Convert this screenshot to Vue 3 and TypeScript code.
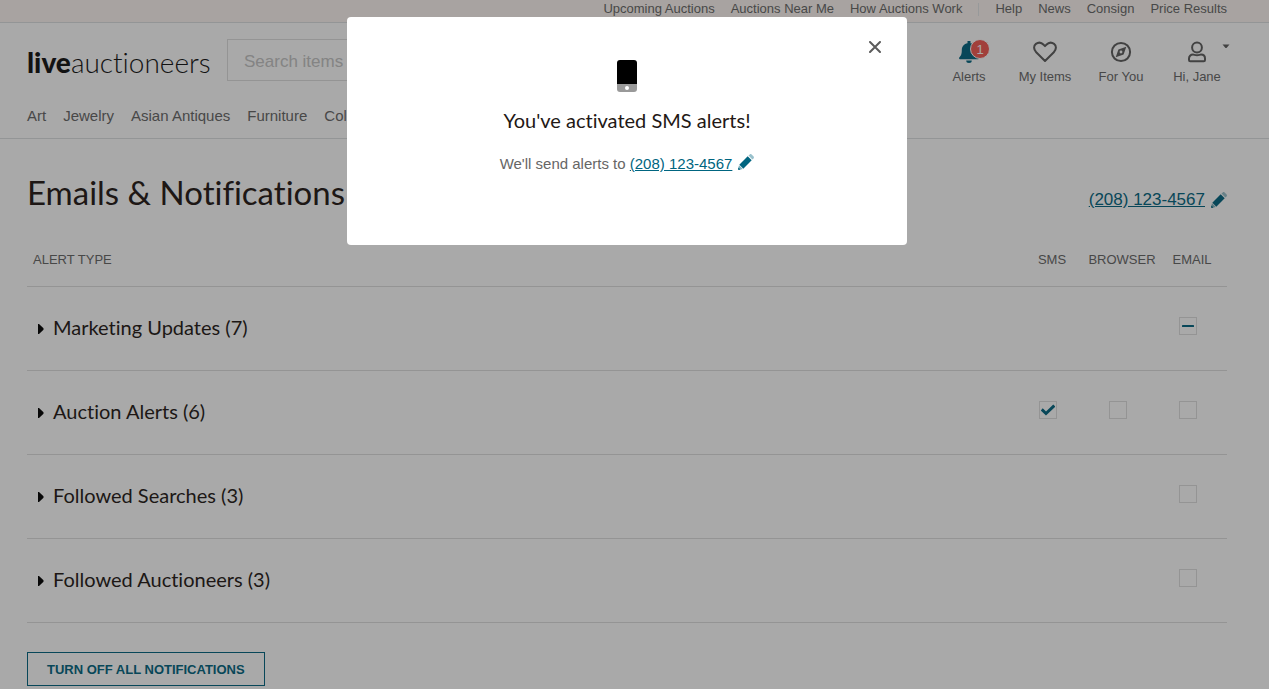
<script setup lang="ts">
import { ref } from 'vue'

type Mark = 'on' | 'off' | 'mixed'
type Channel = 'sms' | 'browser' | 'email'

interface AlertGroup {
  name: string
  count: number
  marks: Partial<Record<Channel, Mark>>
}

const companyLinks = ['Upcoming Auctions', 'Auctions Near Me', 'How Auctions Work']
const helpLinks = ['Help', 'News', 'Consign', 'Price Results']
const categories = ['Art', 'Jewelry', 'Asian Antiques', 'Furniture', 'Collectibles']
const channels: { key: Channel; label: string }[] = [
  { key: 'sms', label: 'SMS' },
  { key: 'browser', label: 'BROWSER' },
  { key: 'email', label: 'EMAIL' },
]
const phone = '(208) 123-4567'
const search = ref('')
const modalOpen = ref(true)

const groups = ref<AlertGroup[]>([
  { name: 'Marketing Updates', count: 7, marks: { email: 'mixed' } },
  { name: 'Auction Alerts', count: 6, marks: { sms: 'on', browser: 'off', email: 'off' } },
  { name: 'Followed Searches', count: 3, marks: { email: 'off' } },
  { name: 'Followed Auctioneers', count: 3, marks: { email: 'off' } },
])

function toggle(group: AlertGroup, key: Channel) {
  group.marks[key] = group.marks[key] === 'on' ? 'off' : 'on'
}

function turnOffAll() {
  for (const group of groups.value) {
    for (const { key } of channels) {
      if (group.marks[key]) group.marks[key] = 'off'
    }
  }
}
</script>

<template>
  <div class="page">
    <div class="topbar">
      <nav class="toplinks" aria-label="Company">
        <a v-for="link in companyLinks" :key="link" href="#">{{ link }}</a>
        <span class="divider"></span>
        <a v-for="link in helpLinks" :key="link" href="#">{{ link }}</a>
      </nav>
    </div>

    <header class="header">
      <div class="brandrow">
        <a class="logo" href="#"><b>live</b><span>auctioneers</span></a>
        <input v-model="search" class="search" type="search" placeholder="Search items" aria-label="Search items" />
        <nav class="account" aria-label="Account">
          <a href="#">
            <span class="icon">
              <svg width="20" height="22" viewBox="0 0 20 22" fill="#006580">
                <path d="M8.500 0h3v2.200c3.400.7 5.700 3.200 5.700 6.800 0 4.400.9 5.700 2.400 7.300.7.900.2 2-.9 2H1.300c-1.100 0-1.600-1.100-.9-2C1.900 14.700 2.800 13.400 2.800 9c0-3.600 2.300-6.100 5.700-6.800z" />
                <path d="M7.200 19.500h5.600a2.800 2.500 0 0 1-5.600 0z" />
              </svg>
              <span class="badge">1</span>
            </span>
            Alerts
          </a>
          <a href="#">
            <span class="icon">
              <svg width="24" height="22" viewBox="0 0 24 22" fill="none" stroke="#5c5c5c" stroke-width="2" stroke-linejoin="round">
                <path d="M12 20 3.200 11.200C.4 8.300.5 4.700 2.900 2.900 5.500 1 8.600 1.600 10.700 3.800L12 5.100l1.300-1.300c2.100-2.200 5.200-2.800 7.800-.9 2.400 1.800 2.500 5.400-.3 8.300z" />
              </svg>
            </span>
            My Items
          </a>
          <a href="#">
            <span class="icon">
              <svg width="22" height="22" viewBox="0 0 22 22" fill="none" stroke="#5c5c5c" stroke-width="2">
                <circle cx="11" cy="11" r="9.100" />
                <path d="M16.300 5.700 13.600 13.600 5.700 16.300 8.400 8.400zM11 9.600a1.400 1.400 0 1 0 0 2.800 1.400 1.400 0 1 0 0-2.800z" fill="#5c5c5c" fill-rule="evenodd" stroke="none" />
              </svg>
            </span>
            For You
          </a>
          <a href="#">
            <span class="icon">
              <svg width="20" height="22" viewBox="0 0 20 22" fill="none" stroke="#5c5c5c" stroke-width="2" stroke-linejoin="round">
                <circle cx="10" cy="6.500" r="4.900" />
                <path d="M6 13.600c1.300 0 2 .7 4 .7s2.700-.7 4-.7c2.400 0 4 1.700 4 3.900v1.500c0 .8-.6 1.300-1.300 1.300H3.300c-.7 0-1.300-.5-1.300-1.300v-1.500c0-2.200 1.600-3.900 4-3.900z" />
              </svg>
              <svg class="caret" width="8" height="5" viewBox="0 0 8 5"><path d="M.5.500h7L4.500 4h-1z" fill="#5c5c5c" /></svg>
            </span>
            Hi, Jane
          </a>
        </nav>
      </div>
      <nav class="categories" aria-label="Categories">
        <a v-for="category in categories" :key="category" href="#">{{ category }}</a>
      </nav>
    </header>

    <main class="content">
      <div class="titlerow">
        <h1>Emails &amp; Notifications</h1>
        <a class="phone" href="#">
          <span>{{ phone }}</span>
          <svg width="16" height="16" viewBox="0 0 16 16" fill="#006580">
            <path d="M9.700 2.300 13.700 6.300 5.300 14.700 1.300 10.700z" />
            <path d="M1 11.300 4.700 15 .8 16 0 15.200z" opacity=".5" />
            <path d="M.5 13.600 2.400 15.500.8 16 0 15.200z" />
            <path d="M10.500 1.600 11.700.4c.6-.5 1.300-.5 1.900 0l2 2c.5.600.5 1.300 0 1.900l-1.200 1.200z" opacity=".4" />
          </svg>
        </a>
      </div>

      <table class="alerts">
        <thead>
          <tr>
            <th class="type" scope="col">ALERT TYPE</th>
            <th v-for="channel in channels" :key="channel.key" class="channel" scope="col">{{ channel.label }}</th>
          </tr>
        </thead>
        <tbody>
          <tr v-for="group in groups" :key="group.name">
            <td>
              <button class="expand" type="button">
                <svg width="6" height="10" viewBox="0 0 6 10"><path d="M0 0h1l4.500 4.300v1.400L1 10H0z" fill="#000" /></svg>
                <span>{{ group.name }} ({{ group.count }})</span>
              </button>
            </td>
            <td v-for="channel in channels" :key="channel.key">
              <label v-if="group.marks[channel.key]" class="check">
                <input
                  type="checkbox"
                  :checked="group.marks[channel.key] === 'on'"
                  :indeterminate.prop="group.marks[channel.key] === 'mixed'"
                  :aria-label="`${group.name} ${channel.label}`"
                  @change="toggle(group, channel.key)"
                />
                <svg v-if="group.marks[channel.key] === 'on'" width="14" height="12" viewBox="0 0 14 12">
                  <path d="M.7 5.400 5 9.500 13.300 1.600" fill="none" stroke="#006580" stroke-width="3" />
                </svg>
                <svg v-else-if="group.marks[channel.key] === 'mixed'" width="12" height="2" viewBox="0 0 12 2">
                  <rect width="12" height="2" rx=".5" fill="#006580" />
                </svg>
              </label>
            </td>
          </tr>
        </tbody>
      </table>

      <button class="turnoff" type="button" @click="turnOffAll">TURN OFF ALL NOTIFICATIONS</button>
    </main>
  </div>

  <div v-if="modalOpen" class="overlay">
    <section class="modal" role="dialog" aria-modal="true" aria-labelledby="modal-title">
      <button class="close" type="button" aria-label="Close" @click="modalOpen = false">
        <svg width="12" height="12" viewBox="0 0 12 12"><path d="M1 1 11 11M11 1 1 11" stroke="#5c5c5c" stroke-width="2" stroke-linecap="round" /></svg>
      </button>
      <svg class="device" width="20" height="32" viewBox="0 0 20 32">
        <path d="M0 24V3a3 3 0 0 1 3-3h14a3 3 0 0 1 3 3v21z" fill="#000" />
        <path d="M0 24h20v5a3 3 0 0 1-3 3H3a3 3 0 0 1-3-3z" fill="#999" />
        <circle cx="10" cy="28" r="2" fill="#fff" />
      </svg>
      <h2 id="modal-title">You've activated SMS alerts!</h2>
      <p>
        We'll send alerts to
        <a class="phone" href="#">
          <span>{{ phone }}</span>
          <svg width="16" height="16" viewBox="0 0 16 16" fill="#006580">
            <path d="M9.700 2.300 13.700 6.300 5.300 14.700 1.300 10.700z" />
            <path d="M1 11.300 4.700 15 .8 16 0 15.200z" opacity=".5" />
            <path d="M.5 13.600 2.400 15.500.8 16 0 15.200z" />
            <path d="M10.500 1.600 11.700.4c.6-.5 1.300-.5 1.900 0l2 2c.5.600.5 1.300 0 1.900l-1.200 1.200z" opacity=".4" />
          </svg>
        </a>
      </p>
    </section>
  </div>
</template>

<style>
body {
  background: #fff;
  overflow: hidden;
}
</style>

<style scoped>
.page,
.overlay {
  font-family: "Liberation Sans", Arial, sans-serif;
  font-variant-ligatures: none;
  color: #666;
}
a {
  color: inherit;
  text-decoration: none;
}
button {
  font-family: inherit;
  cursor: pointer;
}
svg {
  display: block;
  flex: none;
}

.topbar {
  background: #fdf6f2;
  border-bottom: 1px solid #dcdfe1;
  padding: 0 42px 4px 27px;
}
.toplinks {
  display: flex;
  justify-content: flex-end;
  gap: 16px;
  font-size: 13px;
  line-height: 18px;
}
.divider {
  width: 1px;
  height: 13px;
  margin-top: 3px;
  background: #e3e6e8;
}

.header {
  border-bottom: 1px solid #dcdfe1;
  padding: 16px 42px 12px 27px;
}
.brandrow {
  display: flex;
  align-items: flex-start;
}
.logo {
  color: #111;
  font-family: Lato, sans-serif;
  font-size: 28px;
  line-height: 46px;
  width: 200px;
  white-space: nowrap;
}
.logo b {
  font-weight: 900;
}
.logo span {
  font-weight: 300;
}
.search {
  box-sizing: border-box;
  width: 400px;
  height: 42px;
  margin: 0 auto 0 0;
  padding: 3px 16px 0;
  border: 1px solid #dedede;
  border-radius: 0;
  background: #fff;
  font-family: inherit;
  font-size: 17px;
  appearance: none;
}
.search::placeholder {
  color: #c4c4c4;
  opacity: 1;
}
.account {
  display: flex;
  margin-right: -8px;
}
.account a {
  display: flex;
  flex-direction: column;
  align-items: center;
  gap: 4px;
  width: 76px;
  font-size: 13px;
  line-height: 16px;
}
.icon {
  position: relative;
  display: grid;
  place-items: center;
  height: 26px;
}
.badge {
  position: absolute;
  left: 11px;
  top: 0;
  width: 20px;
  height: 20px;
  box-sizing: border-box;
  border: 1px solid #fff;
  border-radius: 50%;
  background: #f35952;
  color: #fff;
  font-size: 13px;
  line-height: 19px;
  text-align: center;
}
.caret {
  position: absolute;
  left: 35px;
  top: 5px;
}
.categories {
  display: flex;
  gap: 17px;
  padding-top: 21px;
  font-size: 15px;
  line-height: 20px;
}

.content {
  padding: 29px 42px 0 27px;
}
.titlerow {
  display: flex;
  justify-content: space-between;
  align-items: center;
}
h1,
h2 {
  margin: 0;
  font-family: Lato, "Open Sans", sans-serif;
  font-weight: 400;
  color: #231815;
}
h1 {
  font-size: 33px;
  line-height: 48px;
}
.phone {
  display: inline-flex;
  align-items: center;
  gap: 6px;
  color: #006580;
}
.phone span {
  text-decoration: underline;
}
.titlerow .phone {
  padding-top: 16px;
  font-size: 17px;
  line-height: 20px;
}
.modal .phone {
  align-items: flex-start;
}

.alerts {
  width: 100%;
  margin-top: 19px;
  border-collapse: separate;
  border-spacing: 0;
}
.alerts th {
  box-sizing: border-box;
  height: 52px;
  padding: 0 0 2px;
  border-bottom: 1px solid #dedede;
  font-size: 13px;
  font-weight: 400;
  text-align: center;
}
.alerts th.type {
  padding-left: 6px;
  text-align: left;
}
.channel {
  width: 70px;
}
.alerts td {
  box-sizing: border-box;
  height: 84px;
  padding: 0;
  border-bottom: 1px solid #dedede;
}
.expand {
  display: flex;
  align-items: center;
  gap: 9px;
  margin-bottom: 4px;
  padding: 0 0 0 11px;
  border: 0;
  background: none;
  color: #231815;
  font-family: Lato, "Open Sans", sans-serif;
  font-size: 20px;
  font-variant-ligatures: none;
  line-height: 24px;
}
.expand svg {
  margin-top: 4px;
}
.check {
  display: grid;
  place-items: center;
  width: 18px;
  height: 18px;
  margin: 0 auto 6px 22px;
}
.check > * {
  grid-area: 1 / 1;
}
.check input {
  box-sizing: border-box;
  width: 18px;
  height: 18px;
  margin: 0;
  border: 1px solid #dedede;
  appearance: none;
}
.check svg {
  position: relative;
  pointer-events: none;
}
.turnoff {
  height: 34px;
  margin-top: 29px;
  padding: 1px 19px 0;
  border: 1px solid #006580;
  background: none;
  color: #006580;
  font-size: 13px;
  font-weight: 700;
}

.overlay {
  position: fixed;
  inset: 0;
  display: flex;
  justify-content: center;
  align-items: flex-start;
  padding: 17px 15px 0 0;
  background: rgba(23, 23, 23, 0.37);
}
.modal {
  position: relative;
  box-sizing: border-box;
  display: flex;
  flex-direction: column;
  align-items: center;
  width: 560px;
  padding: 43px 32px 71px;
  border-radius: 4px;
  background: #fff;
}
.close {
  position: absolute;
  top: 20px;
  right: 22px;
  display: grid;
  place-items: center;
  width: 20px;
  height: 20px;
  padding: 0;
  border: 0;
  background: none;
}
h2 {
  margin-top: 13px;
  font-size: 20px;
  line-height: 30px;
}
.modal p {
  margin: 19px 0 0;
  font-size: 15px;
  line-height: 20px;
}
</style>
